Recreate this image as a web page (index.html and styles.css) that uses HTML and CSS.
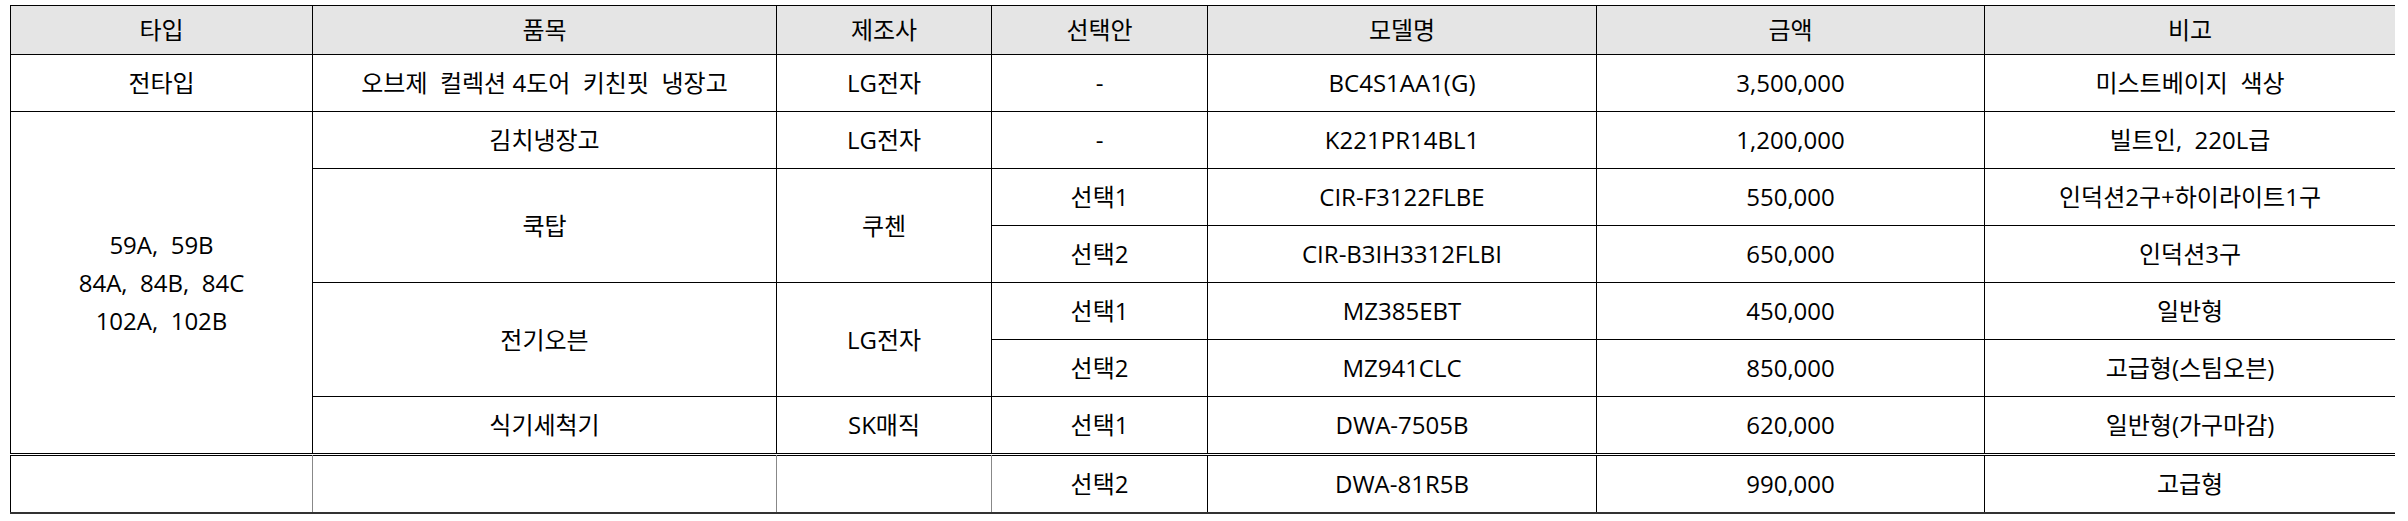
FILE: index.html
```html
<!DOCTYPE html>
<html lang="ko">
<head>
<meta charset="utf-8">
<title>가전 옵션</title>
<link rel="stylesheet" href="styles.css">
</head>
<body>
<table class="spec">
  <colgroup>
    <col class="c-type"><col class="c-item"><col class="c-maker"><col class="c-opt"><col class="c-model"><col class="c-price"><col class="c-note">
  </colgroup>
  <thead>
    <tr class="head">
      <th>타입</th><th>품목</th><th>제조사</th><th>선택안</th><th>모델명</th><th>금액</th><th>비고</th>
    </tr>
  </thead>
  <tbody>
    <tr>
      <td>전타입</td><td>오브제&nbsp; 컬렉션 4도어&nbsp; 키친핏&nbsp; 냉장고</td><td>LG전자</td><td>-</td><td>BC4S1AA1(G)</td><td>3,500,000</td><td>미스트베이지&nbsp; 색상</td>
    </tr>
    <tr>
      <td rowspan="6" class="types">59A,&nbsp; 59B<br>84A,&nbsp; 84B,&nbsp; 84C<br>102A,&nbsp; 102B</td>
      <td>김치냉장고</td><td>LG전자</td><td>-</td><td>K221PR14BL1</td><td>1,200,000</td><td>빌트인,&nbsp; 220L급</td>
    </tr>
    <tr>
      <td rowspan="2">쿡탑</td><td rowspan="2">쿠첸</td><td>선택1</td><td>CIR-F3122FLBE</td><td>550,000</td><td>인덕션2구+하이라이트1구</td>
    </tr>
    <tr>
      <td>선택2</td><td>CIR-B3IH3312FLBI</td><td>650,000</td><td>인덕션3구</td>
    </tr>
    <tr>
      <td rowspan="2">전기오븐</td><td rowspan="2">LG전자</td><td>선택1</td><td>MZ385EBT</td><td>450,000</td><td>일반형</td>
    </tr>
    <tr>
      <td>선택2</td><td>MZ941CLC</td><td>850,000</td><td>고급형(스팀오븐)</td>
    </tr>
    <tr>
      <td>식기세척기</td><td>SK매직</td><td>선택1</td><td>DWA-7505B</td><td>620,000</td><td>일반형(가구마감)</td>
    </tr>
  </tbody>
</table>
<table class="spec extra">
  <colgroup>
    <col class="c-type"><col class="c-item"><col class="c-maker"><col class="c-opt"><col class="c-model"><col class="c-price"><col class="c-note">
  </colgroup>
  <tbody>
    <tr>
      <td class="soft"></td><td class="soft"></td><td class="soft"></td><td>선택2</td><td>DWA-81R5B</td><td>990,000</td><td>고급형</td>
    </tr>
  </tbody>
</table>
</body>
</html>
```

FILE: styles.css
```css
html, body {
  background: #ffffff;
}
body {
  margin: 5px 13px 0 10px;
  font-family: "Open Sans", "Noto Sans CJK KR", sans-serif;
  font-size: 24px;
  color: #000000;
}
.spec {
  width: 100%;
  table-layout: fixed;
  border-collapse: collapse;
}
.c-type { width: 302px; }
.c-item { width: 464px; }
.c-maker { width: 215px; }
.c-opt { width: 216px; }
.c-model { width: 389px; }
.c-price { width: 388px; }
.c-note { width: 411px; }
.spec th,
.spec td {
  border: 1px solid #000000;
  padding: 0;
  text-align: center;
  vertical-align: middle;
  font-weight: normal;
  height: 56px;
  line-height: 30px;
}
.head th {
  background: #e5e5e5;
  height: 48px;
}
.spec td.types {
  line-height: 38px;
}
.extra {
  margin-top: 1px;
}
.extra td {
  border-bottom: 2px solid #333333;
}
.extra td.soft {
  border-left-color: #888888;
  border-right-color: #888888;
}
.extra td.soft:first-child {
  border-left-color: #000000;
}
```
